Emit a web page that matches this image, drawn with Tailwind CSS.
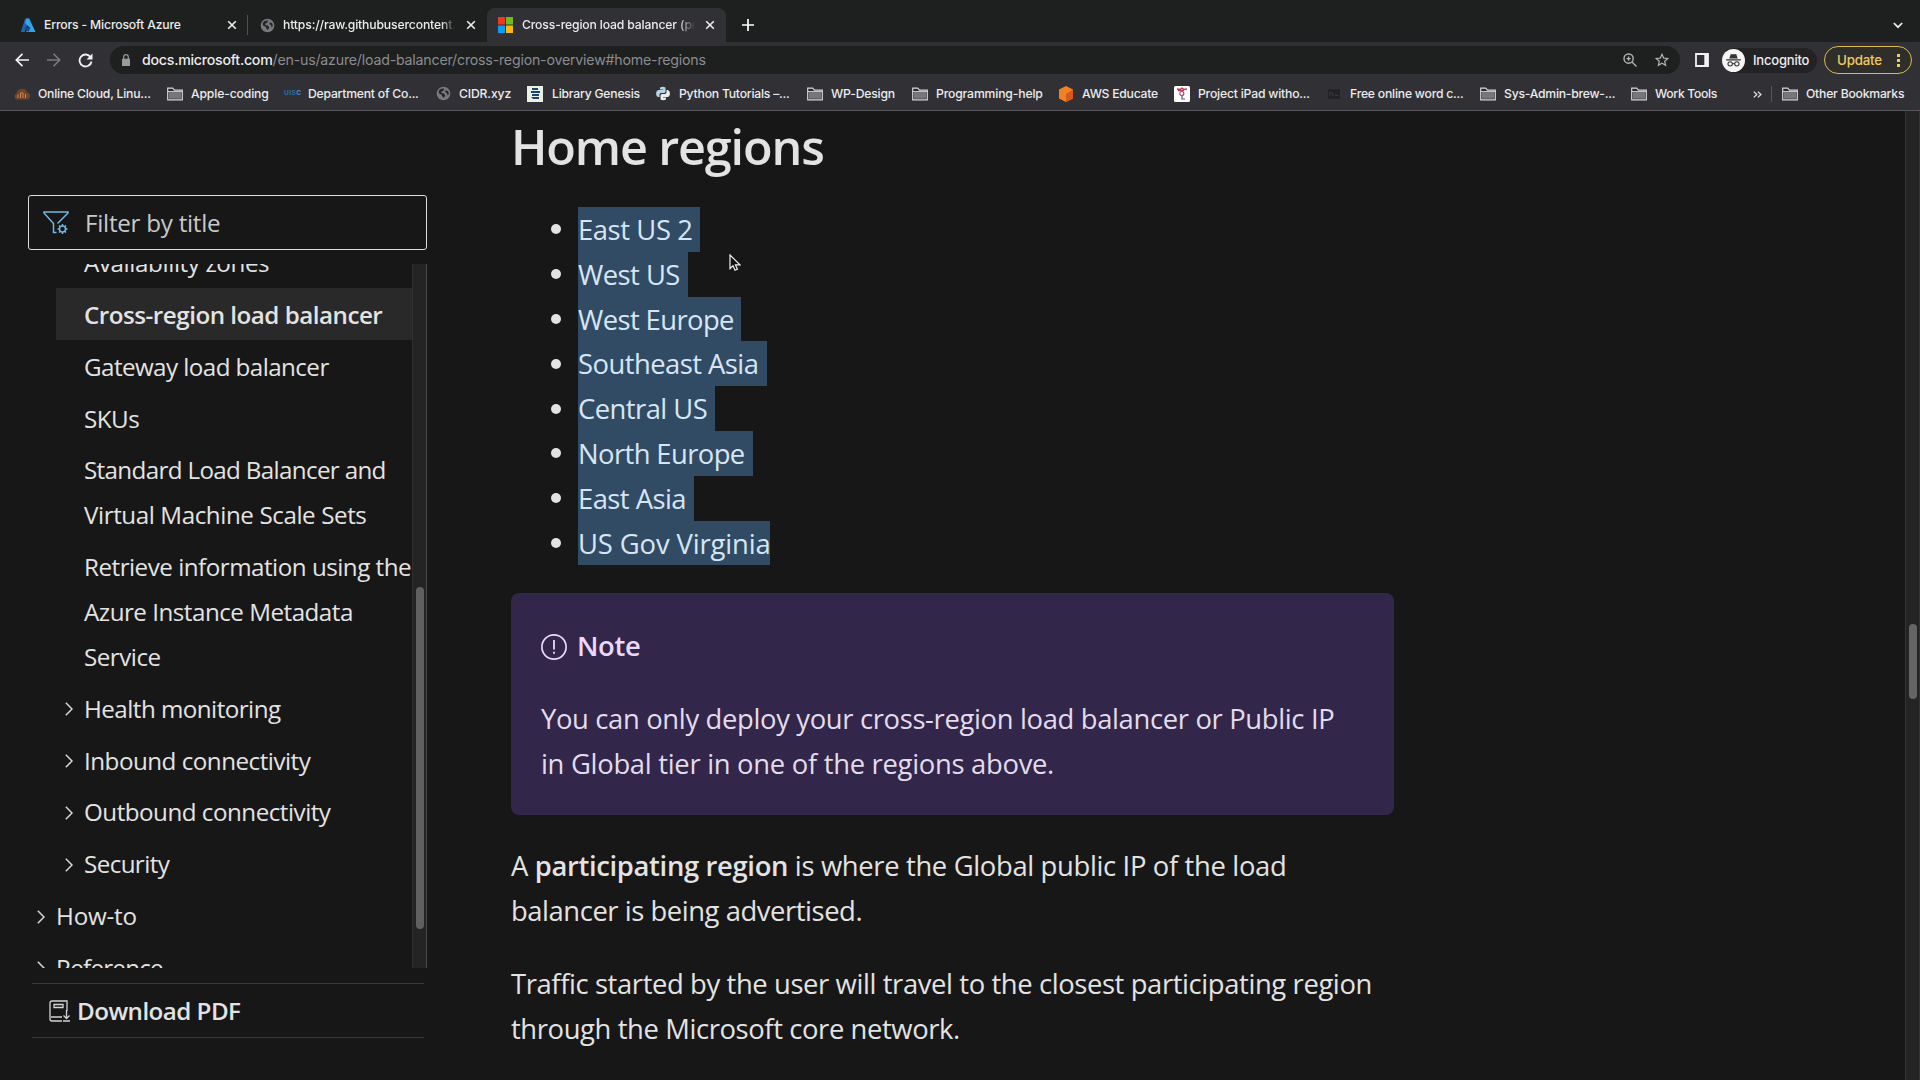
<!DOCTYPE html>
<html lang="en">
<head>
<meta charset="utf-8">
<title>Cross-region load balancer (preview)</title>
<script src="https://cdn.jsdelivr.net/npm/@tailwindcss/browser@4"></script>
</head>
<body class="w-[1920px] h-[1080px] overflow-hidden flex flex-col bg-[#171717] text-[#e3e3e3] font-['Open_Sans','Noto_Sans',sans-serif]">
<svg class="hidden">
  <symbol id="folder" viewBox="0 0 16 14"><path d="M.7 12.3V1.2h5l1.7 2h7.9v9.6H.7z" fill="#2b2b2f" stroke="#d6d6d8" stroke-width="1.2"/><path d="M2 5.2h12v6.5H2z" fill="#77777b"/><path d="M.7 4.6h14.6" stroke="#d6d6d8"/></symbol>
  <symbol id="globe" viewBox="0 0 16 16"><circle cx="8" cy="8" r="7.3" fill="#77797d"/><path d="M3 5.2c1.5-2 3.4-2.8 5.6-2.4L7.800 5l-2 .8-.2 1.700 2.900.6 1.400 2-1.600 2.700L6.600 11 6 9.200 3 7.600zM10.300 4.600l2.700 1 .8 3-1.600 1.200-.5-2.400-1.800-.8z" fill="#25262a"/></symbol>
  <symbol id="x" viewBox="0 0 10 10"><path d="M1.200 1.200l7.600 7.600M8.800 1.200L1.200 8.800" stroke="#eee" stroke-width="1.600" fill="none"/></symbol>
  <symbol id="chev" viewBox="0 0 8 14"><path d="M.8.8L7 7 .8 13.200" stroke="#d8d8d8" stroke-width="1.500" fill="none"/></symbol>
</svg>

<!-- Browser chrome -->
<header class="h-[111px] shrink-0 bg-[#313135] border-b border-[#57575b] font-['Inter',sans-serif] font-medium text-[12.2px] tracking-[-0.15px] text-[#ececee] whitespace-nowrap">
  <div class="h-[42px] bg-[#1e1f1f] flex pt-2">
    <div class="w-[247px] h-[34px] flex items-center pl-5">
      <svg class="w-4 h-[15px] mr-2" viewBox="0 0 16 15"><path d="M5.200.5h4L4.800 14H.800z" fill="#1c66b8"/><path d="M9.200.5H6.300L5 5l4.500 4.500L6 14h9.500z" fill="#35a3ea"/><path d="M5.200 9.300h5.500L8.500 14 4.300 10z" fill="#0e4f95"/></svg>
      <span class="w-[183px]">Errors - Microsoft Azure</span>
      <svg class="w-[10px] h-[10px]"><use href="#x"/></svg>
    </div>
    <div class="w-px h-[20px] mt-[7px] bg-[#505154]"></div>
    <div class="w-[239px] h-[34px] flex items-center pl-[12px]">
      <svg class="w-[15px] h-[15px] mr-2"><use href="#globe"/></svg>
      <span class="w-[172px] mr-[11px] overflow-hidden [mask-image:linear-gradient(to_right,black_92%,transparent)]">https://raw.githubusercontent.com</span>
      <svg class="w-[10px] h-[10px]"><use href="#x"/></svg>
    </div>
    <div class="w-[239px] h-[34px] rounded-t-lg bg-[#313135] flex items-center pl-[11px]">
      <svg class="w-[15px] h-[16px] mr-[9px]" viewBox="0 0 15 16"><path d="M0 0h7v7.500H0z" fill="#f03a1d"/><path d="M8 0h7v7.500H8z" fill="#6fbe1e"/><path d="M0 8.500h7V16H0z" fill="#0e9df0"/><path d="M8 8.500h7V16H8z" fill="#fdb713"/></svg>
      <span class="w-[173px] mr-[10px] overflow-hidden [mask-image:linear-gradient(to_right,black_90%,transparent)]">Cross-region load balancer (preview)</span>
      <svg class="w-[10px] h-[10px]"><use href="#x"/></svg>
    </div>
    <svg class="w-3 h-3 ml-[16px] mt-[11px]" viewBox="0 0 12 12"><path d="M6 0v12M0 6h12" stroke="#fff" stroke-width="1.700"/></svg>
    <svg class="w-[10px] h-[7px] ml-auto mr-[17px] mt-[14px]" viewBox="0 0 10 7"><path d="M.8 1l4.200 4.200L9.200 1" stroke="#eee" stroke-width="1.700" fill="none"/></svg>
  </div>

  <div class="h-[36px] flex items-center">
    <svg class="w-[14px] h-[14px] ml-[15px]" viewBox="0 0 14 14"><path d="M7.500.8L1.300 7l6.200 6.200M1.500 7H14" stroke="#f2f2f2" stroke-width="1.700" fill="none"/></svg>
    <svg class="w-[14px] h-[14px] ml-[18px]" viewBox="0 0 14 14"><path d="M6.500.8L12.700 7l-6.200 6.200M12.500 7H0" stroke="#7b7b7f" stroke-width="1.600" fill="none"/></svg>
    <svg class="w-[15px] h-[15px] ml-[17px]" viewBox="0 0 15 15"><path d="M12.600 4.200A6 6 0 1 0 13.500 8.500" stroke="#f2f2f2" stroke-width="1.800" fill="none"/><path d="M14.500.5v6H8.500z" fill="#f2f2f2"/></svg>
    <div class="w-[1570px] h-7 ml-[17px] rounded-full bg-[#1e1f1f] flex items-center pl-[12px] pr-[11px] text-[14.2px] tracking-[-0.26px]">
      <svg class="w-2 h-[12px] mr-[12px]" viewBox="0 0 8 12"><path d="M0 4.700h8V12H0z" fill="#9a9a9d"/><path d="M1.700 5V3a2.300 2.300 0 0 1 4.600 0v2" stroke="#9a9a9d" stroke-width="1.200" fill="none"/></svg>
      <span>docs.microsoft.com</span><span class="text-[#8b8c8f] font-normal tracking-[-0.21px]">/en-us/azure/load-balancer/cross-region-overview#home-regions</span>
      <svg class="w-[14px] h-[14px] ml-auto mr-[18px]" viewBox="0 0 14 14"><circle cx="5.600" cy="5.600" r="4.600" stroke="#b3b3b6" stroke-width="1.400" fill="none"/><path d="M9 9l4.500 4.500M3.500 5.600h4.200M5.600 3.500v4.200" stroke="#b3b3b6" stroke-width="1.400"/></svg>
      <svg class="w-[14px] h-[14px]" viewBox="0 0 14 14"><path d="M7 1.300l1.700 3.800 4.100.4-3.100 2.700.9 4.100L7 10.200l-3.600 2.100.9-4.100L1.200 5.500l4.100-.4z" stroke="#b3b3b6" stroke-width="1.200" fill="none"/></svg>
    </div>
    <svg class="w-[14px] h-[14px] ml-[15px]" viewBox="0 0 14 14"><path d="M1 1h12v12H1z" stroke="#f2f2f2" stroke-width="1.800" fill="none"/><path d="M9.300 1H13v12H9.300z" fill="#f2f2f2"/></svg>
    <div class="ml-[13px] w-[95px] h-[25px] rounded-full bg-[#232326] flex items-center text-[13px] tracking-[-0.2px]">
      <svg class="w-[23px] h-[23px] mr-[8px]" viewBox="0 0 22 22"><circle cx="11" cy="11" r="11" fill="#f5f5f5"/><path d="M7 9l1.400-4.300 1.400.3h2.400l1.400-.3L15 9zM4 9.800h14v1.100H4z" fill="#333"/><circle cx="7.800" cy="14.200" r="2.100" stroke="#333" fill="none"/><circle cx="14.200" cy="14.200" r="2.100" stroke="#333" fill="none"/><path d="M9.900 14h2.200" stroke="#333"/></svg><span class="pt-[1px]">Incognito</span>
    </div>
    <div class="ml-[7px] w-[88px] h-[28px] rounded-full border-[1.500px] border-[#d9bb4f] bg-[#302e2a] text-[#edca62] flex items-center pl-[12px] text-[13.300px] tracking-[-0.2px]"><span class="pt-[1px]">Update</span>
      <svg class="w-[3px] h-[13px] ml-auto mr-[11px]" viewBox="0 0 3 13"><path d="M0 0h3v3H0zM0 5h3v3H0zM0 10h3v3H0z" fill="#edca62"/></svg>
    </div>
  </div>

  <div class="h-[32px] flex items-center">
    <div class="w-[177px] flex items-center pl-[14px]"><svg class="w-4 h-3 mr-[8px]" viewBox="0 0 16 12"><path d="M3 11.500a3 3 0 0 1-.5-5.800A5.400 5.400 0 0 1 13 4.600a3.500 3.500 0 0 1 .3 6.900z" fill="#6f452b"/><path d="M4 10V6.500M6.500 10V5h2.500v5M11.500 10V6" stroke="#d98446" stroke-width="1" fill="none"/></svg><span class="tracking-[-0.22px]">Online Cloud, Linu...</span></div>
    <div class="w-[107px] -ml-[10px] flex items-center"><svg class="w-4 h-[14px] mr-2"><use href="#folder"/></svg><span>Apple-coding</span></div>
    <div class="w-[162px] pl-[10px] flex items-center"><span class="w-[16px] mr-[8px] text-[6.500px] tracking-[0.5px] font-bold text-[#2d6fae] text-center">UIS<span class="text-[#3f8fd6]">C</span></span><span class="tracking-[-0.23px]">Department of Co...</span></div>
    <div class="w-[91px] flex items-center"><svg class="w-[15px] h-[15px] mr-2"><use href="#globe"/></svg><span>CIDR.xyz</span></div>
    <div class="w-[129px] flex items-center"><svg class="w-4 h-4 mr-[9px]" viewBox="0 0 16 16"><path d="M0 0h16v16H0z" fill="#e9f0e4"/><path d="M5 2h6v2H5zM4 5h9v2H4zM5 8h7v2H5zM4 11h8v2H6z" fill="#1f4275"/></svg><span class="tracking-[-0.22px]">Library Genesis</span></div>
    <div class="w-[151px] flex items-center"><svg class="w-[14px] h-[15px] mr-[9px]" viewBox="0 0 14 15"><path d="M4 1.500Q7 0 9.500 1.500V6L8.500 7H5Q3.500 7 3.500 9v2H2Q0 10 0 7.500T2 4h5V3.500H4z" fill="#b5d3e2"/><path d="M10 13.500Q7 15 4.500 13.500V9.500L5.500 8H9q1.500 0 1.500-2V4H12q2 1 2 3.500T12 11H7v.5h3z" fill="#e9eeea"/></svg><span class="tracking-[-0.22px]">Python Tutorials –...</span></div>
    <div class="w-[105px] flex items-center"><svg class="w-4 h-[14px] mr-[8px]"><use href="#folder"/></svg><span class="tracking-[-0.2px]">WP-Design</span></div>
    <div class="w-[146px] flex items-center"><svg class="w-4 h-[14px] mr-[8px]"><use href="#folder"/></svg><span>Programming-help</span></div>
    <div class="w-[116px] flex items-center"><svg class="w-4 h-4 mr-[8px]" viewBox="0 0 16 16"><path d="M8 0l7 3.500v9L8 16l-7-3.500v-9z" fill="#f08224"/><path d="M8 8l7-4.500v9L8 16z" fill="#d8581c"/></svg><span class="tracking-[-0.25px]">AWS Educate</span></div>
    <div class="w-[152px] flex items-center"><svg class="w-4 h-4 mr-[8px]" viewBox="0 0 16 16"><rect width="16" height="16" rx="1.500" fill="#fff"/><path d="M3 3l3 .5L8 2l2 1.500L13 3M4 4.500h6" stroke="#b53a52" stroke-width="1.400" fill="none"/><circle cx="7.800" cy="7.500" r="2" stroke="#a6457e" stroke-width="1.200" fill="none"/><path d="M8 9.500V13h3" stroke="#6a4a7a" stroke-width="1.200" fill="none"/></svg><span class="tracking-[-0.2px]">Project iPad witho...</span></div>
    <div class="w-[154px] pl-[2px] flex items-center"><svg class="w-3 h-[10px] mr-[10px]" viewBox="0 0 12 10"><path d="M0 0h12v10H0z" fill="#232326"/><path d="M2 7V3l3 2v2M7 6.500h3" stroke="#3b3b3f" fill="none"/></svg><span class="tracking-[-0.22px]">Free online word c...</span></div>
    <div class="w-[151px] flex items-center"><svg class="w-4 h-[14px] mr-[8px]"><use href="#folder"/></svg><span class="tracking-[-0.24px]">Sys-Admin-brew-...</span></div>
    <div class="w-[122px] flex items-center"><svg class="w-4 h-[14px] mr-[8px]"><use href="#folder"/></svg><span class="tracking-[-0.32px]">Work Tools</span></div>
    <svg class="w-[9px] h-[7px]" viewBox="0 0 9 7"><path d="M.8.600l3 2.900-3 2.900M4.900.600l3 2.900-3 2.900" stroke="#e4e4e6" stroke-width="1.300" fill="none"/></svg>
    <div class="w-px h-4 ml-[9px] bg-[#55565a]"></div>
    <div class="ml-[10px] flex items-center"><svg class="w-4 h-[14px] mr-[8px]"><use href="#folder"/></svg><span class="tracking-[-0.22px]">Other Bookmarks</span></div>
  </div>
</header>

<main class="flex-1 min-h-0 flex">
  <!-- Table of contents -->
  <aside class="w-[427px] shrink-0 pt-[84px] pl-[28px] text-[24.200px] leading-[44.800px] tracking-[-0.5px] whitespace-nowrap">
    <div class="h-[55px] rounded-[3px] border border-[#dcdcdc] flex items-center pl-[14px] text-[#c9c9c9] tracking-[-0.26px]">
      <svg class="w-[26px] h-[24px] mr-[16px]" viewBox="0 0 26 24" fill="none" stroke="#75b5e2" stroke-width="1.500"><path d="M14.500 12.500L25 2V1H1v1l9.500 10.500v9h3"/><circle cx="19.500" cy="18" r="3"/><path d="M19.500 13v2M19.500 21v2M14.500 18h2M22.500 18h2M16 14.500l1.300 1.300M21.700 20.200l1.300 1.300M23 14.500l-1.300 1.300M17.300 20.200L16 21.500"/></svg>
      <span class="pt-[2px]">Filter by title</span>
    </div>
    <div class="h-[704px] mt-[14px] flex overflow-hidden">
      <nav class="w-[384px] h-[760px] pl-[28px]">
        <div class="-mt-[27.900px] pt-[4.800px] pb-[2.300px] pl-[28px] tracking-[-0.4px]">Availability zones</div>
        <div class="pt-[4.800px] pb-[2.300px] pl-[28px] bg-[#292929] font-semibold">Cross-region load balancer</div>
        <div class="pt-[4.800px] pb-[2.300px] pl-[28px] tracking-[-0.57px]">Gateway load balancer</div>
        <div class="pt-[4.800px] pb-[2.300px] pl-[28px]">SKUs</div>
        <div class="pt-[4.800px] pb-[2.300px] pl-[28px]"><span class="tracking-[-0.660px]">Standard Load Balancer and</span><br><span class="tracking-[-0.420px]">Virtual Machine Scale Sets</span></div>
        <div class="pt-[4.800px] pb-[2.300px] pl-[28px]">Retrieve information using the<br>Azure Instance Metadata<br>Service</div>
        <div class="pt-[4.800px] pb-[2.300px] pl-[9px] flex items-center"><svg class="w-2 h-[14px] mr-[11px]"><use href="#chev"/></svg><span class="tracking-[-0.540px]">Health monitoring</span></div>
        <div class="pt-[4.800px] pb-[2.300px] pl-[9px] flex items-center"><svg class="w-2 h-[14px] mr-[11px]"><use href="#chev"/></svg>Inbound connectivity</div>
        <div class="pt-[4.800px] pb-[2.300px] pl-[9px] flex items-center"><svg class="w-2 h-[14px] mr-[11px]"><use href="#chev"/></svg>Outbound connectivity</div>
        <div class="pt-[4.800px] pb-[2.300px] pl-[9px] flex items-center"><svg class="w-2 h-[14px] mr-[11px]"><use href="#chev"/></svg><span class="tracking-[-0.600px]">Security</span></div>
        <div class="-ml-[19px] pt-[4.800px] pb-[2.300px] flex items-center"><svg class="w-2 h-[14px] mr-[11px]"><use href="#chev"/></svg><span class="tracking-[-0.200px]">How-to</span></div>
        <div class="-ml-[19px] pt-[4.800px] pb-[2.300px] flex items-center"><svg class="w-2 h-[14px] mr-[11px]"><use href="#chev"/></svg><span class="tracking-[-0.750px]">Reference</span></div>
      </nav>
      <div class="w-[15px] bg-[#242424] border-l border-r border-l-[#303030] border-r-[#484848] pt-[323px] pl-[3px]"><div class="w-2 h-[342px] rounded-full bg-[#606060]"></div></div>
    </div>
    <div class="mt-[15px] ml-1 mr-[3px] h-[55px] border-y border-[#393939] flex items-center pl-[17px] font-semibold tracking-[-0.540px]">
      <svg class="w-[21px] h-[22px] mr-[7px]" viewBox="0 0 21 22" fill="none" stroke="#d4d4d4" stroke-width="1.300"><path d="M18 11V1H3Q1 1 1 3v16q0 2 2 2h10M2 17h11M5 4.500h9v3H5zM17.500 10v8M14.500 15.500l3 3 3-3M14 21h7"/></svg>
      <span class="pt-[2px]">Download PDF</span>
    </div>
  </aside>

  <!-- Article -->
  <article class="ml-[84px] w-[883px] shrink-0 pt-[5px] text-[27.400px] leading-[44.800px] tracking-[-0.340px] whitespace-nowrap">
    <h2 class="h-[60px] text-[48.500px] leading-[60px] font-semibold tracking-[-1.130px]">Home regions</h2>
    <ul class="mt-[31px] text-[#d6e6f5] leading-[42.800px] tracking-[-0.540px]">
      <li class="flex items-center pl-[40px]"><i class="w-[10px] h-[10px] rounded-full bg-[#e3e3e3] mr-[17px]"></i><span class="bg-[#324b65] pt-[2px] w-[122px] tracking-[-0.410px]">East US 2</span></li>
      <li class="flex items-center pl-[40px]"><i class="w-[10px] h-[10px] rounded-full bg-[#e3e3e3] mr-[17px]"></i><span class="bg-[#324b65] pt-[2px] w-[110px]">West US</span></li>
      <li class="flex items-center pl-[40px]"><i class="w-[10px] h-[10px] rounded-full bg-[#e3e3e3] mr-[17px]"></i><span class="bg-[#324b65] pt-[2px] w-[163px] tracking-[-0.600px]">West Europe</span></li>
      <li class="flex items-center pl-[40px]"><i class="w-[10px] h-[10px] rounded-full bg-[#e3e3e3] mr-[17px]"></i><span class="bg-[#324b65] pt-[2px] w-[189px]">Southeast Asia</span></li>
      <li class="flex items-center pl-[40px]"><i class="w-[10px] h-[10px] rounded-full bg-[#e3e3e3] mr-[17px]"></i><span class="bg-[#324b65] pt-[2px] w-[137px]">Central US</span></li>
      <li class="flex items-center pl-[40px]"><i class="w-[10px] h-[10px] rounded-full bg-[#e3e3e3] mr-[17px]"></i><span class="bg-[#324b65] pt-[2px] w-[175px] tracking-[-0.600px]">North Europe</span></li>
      <li class="flex items-center pl-[40px]"><i class="w-[10px] h-[10px] rounded-full bg-[#e3e3e3] mr-[17px]"></i><span class="bg-[#324b65] pt-[2px] w-[116px]">East Asia</span></li>
      <li class="flex items-center pl-[40px]"><i class="w-[10px] h-[10px] rounded-full bg-[#e3e3e3] mr-[17px]"></i><span class="bg-[#324b65] pt-[2px] w-[192px] tracking-[-0.120px]">US Gov Virginia</span></li>
    </ul>
    <div class="mt-[27.600px] h-[222px] rounded-[8px] bg-[#32264a] pt-[31px] pl-[30px] text-[#e3dcec]">
      <div class="h-[45px] flex items-center font-semibold text-[#ead8ff]">
        <svg class="w-[26px] h-[26px] mr-[10px] mt-[1px]" viewBox="0 0 26 26"><circle cx="13" cy="13" r="12.100" stroke="#ead8ff" stroke-width="1.700" fill="none"/><path d="M13 6v9.500M13 17.700v2" stroke="#ead8ff" stroke-width="1.800"/></svg>Note
      </div>
      <p class="mt-[28px]">You can only deploy your cross-region load balancer or Public IP<br><span class="tracking-[-0.290px]">in Global tier in one of the regions above.</span></p>
    </div>
    <p class="mt-[29px]">A <b class="font-semibold">participating region</b> is where the Global public IP of the load<br><span class="tracking-[-0.440px]">balancer is being advertised.</span></p>
    <p class="mt-[28.400px] tracking-[-0.390px]">Traffic started by the user will travel to the closest participating region<br>through the Microsoft core network.</p>
  </article>

  <div class="ml-auto w-[15px] bg-[#242424] border-x border-[#343434] pt-[513px] pl-[3px]"><div class="w-2 h-[75px] rounded-full bg-[#656565]"></div></div>
</main>

<!-- Mouse pointer -->
<svg class="absolute left-[729px] top-[254px] w-[12px] h-[18px]" viewBox="0 0 12 18"><path d="M1 1v13.500l3-2.800 2 4.600 2.400-1-2-4.500H11z" fill="#111" stroke="#eee" stroke-width="1.200"/></svg>
</body>
</html>
